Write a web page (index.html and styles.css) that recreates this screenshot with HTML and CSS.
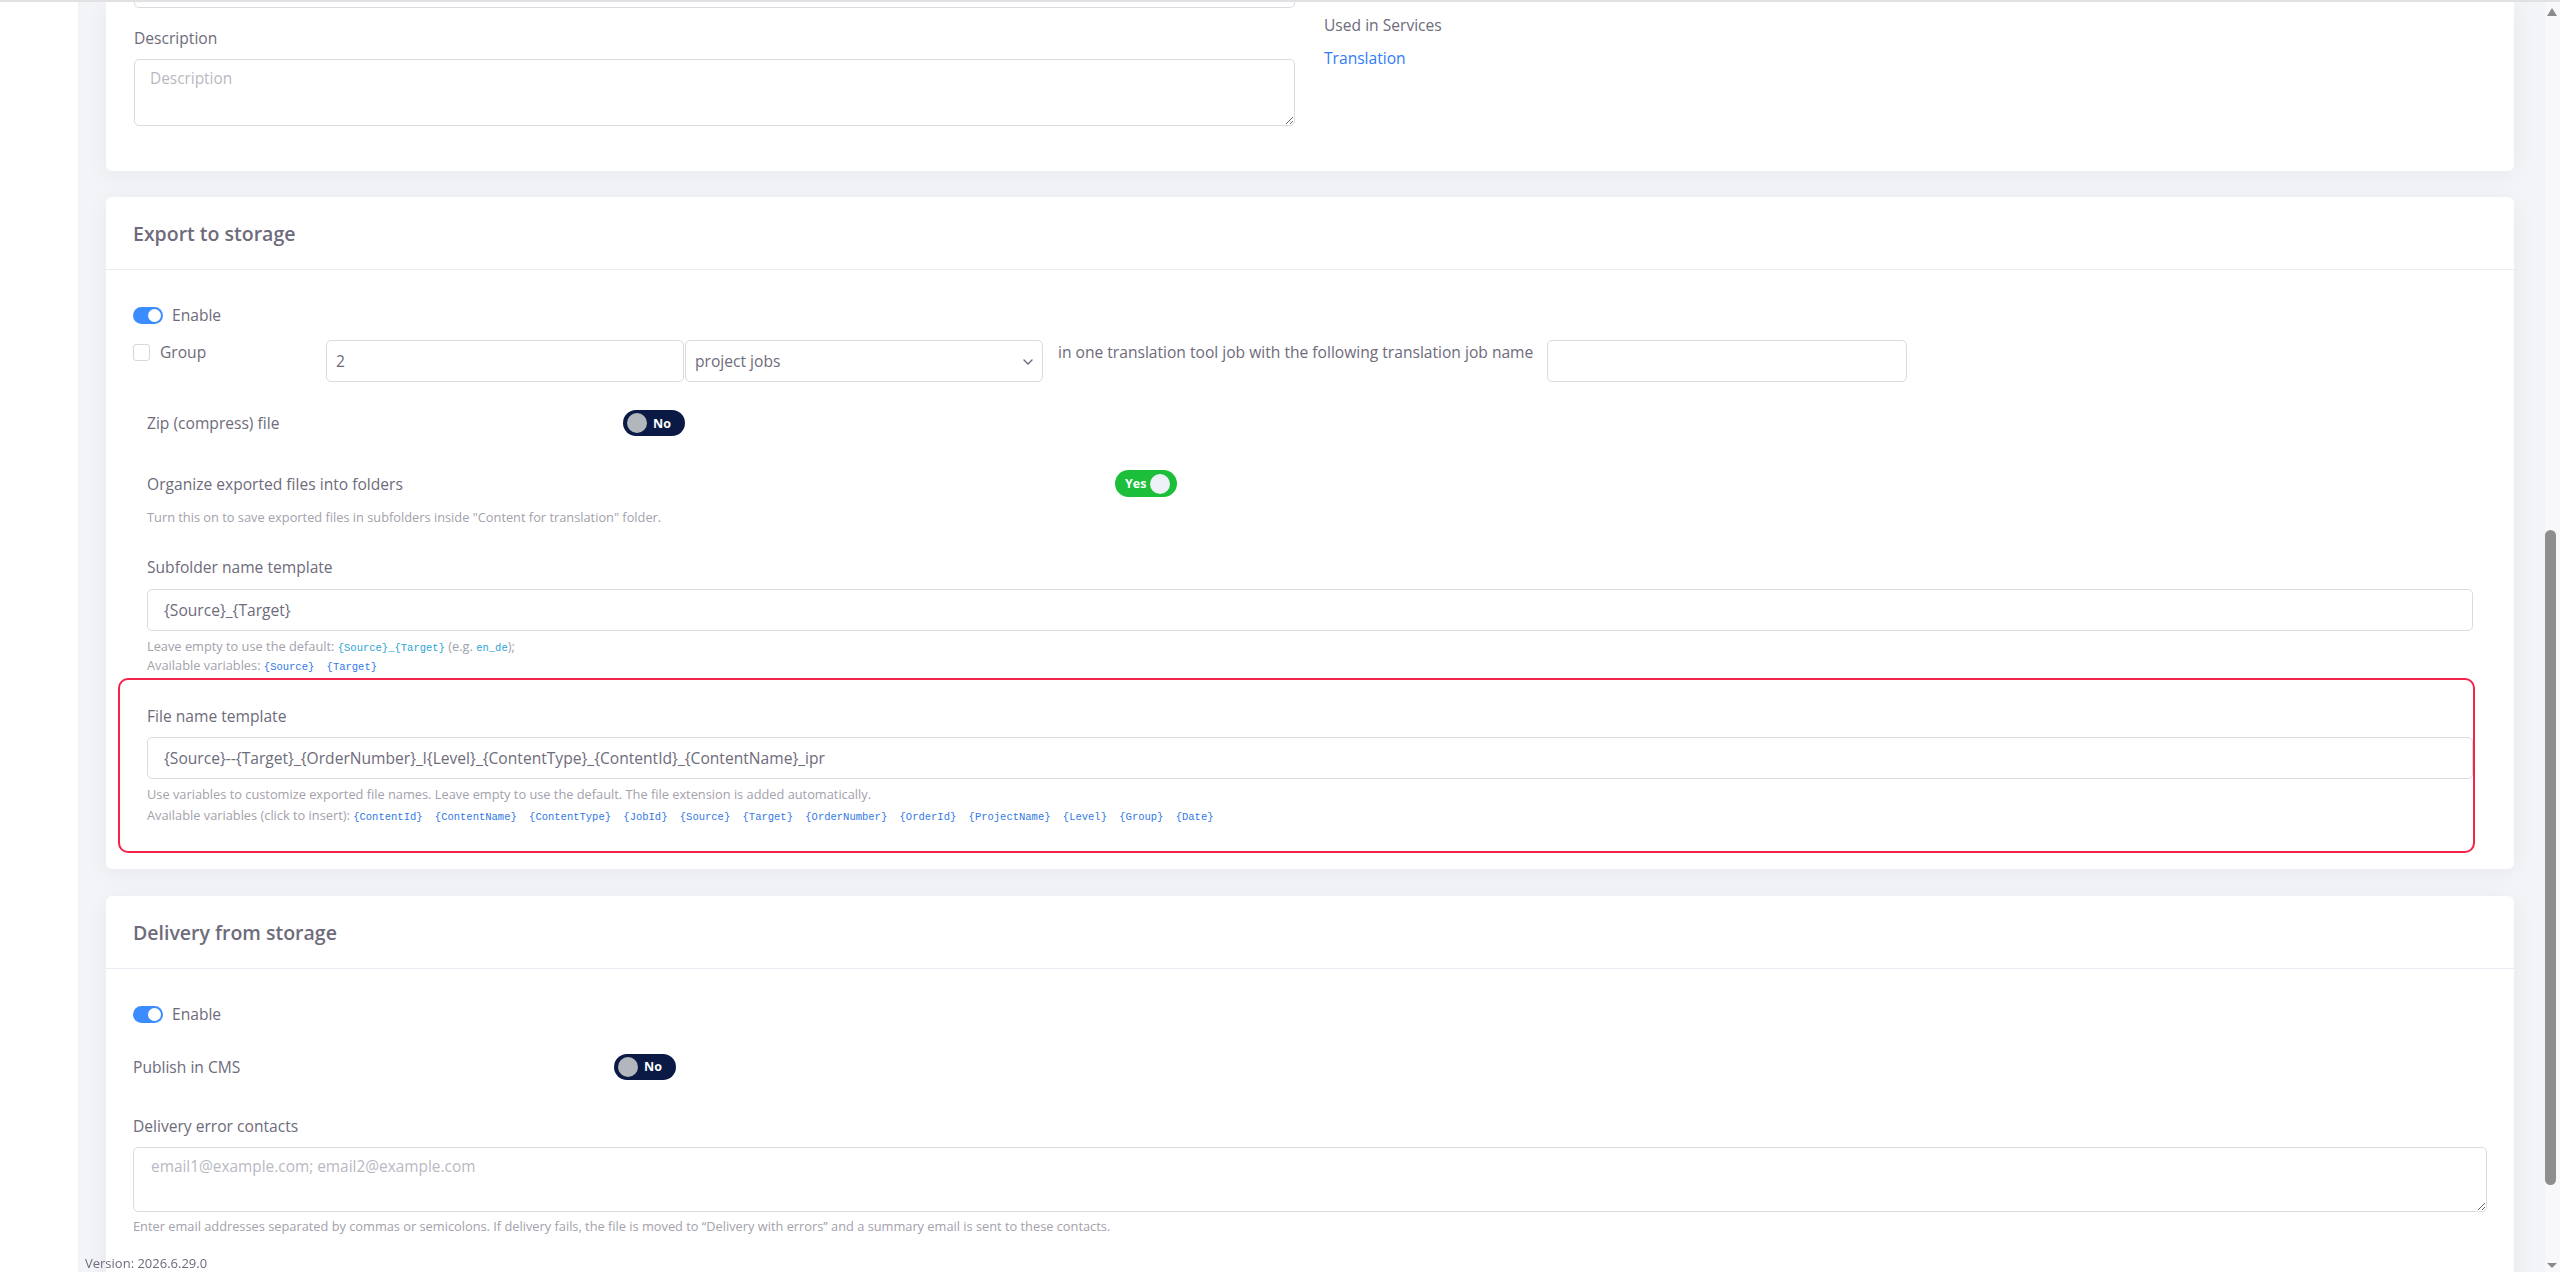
FILE: index.html
```html
<!DOCTYPE html>
<html lang="en">
<head>
<meta charset="utf-8">
<title>Storage settings</title>
<link rel="stylesheet" href="styles.css">
</head>
<body>
<div class="topline"></div>
<div class="frame">
  <div class="sidebar"></div>
  <main class="main">
    <section class="card card-general">
      <div class="general-grid">
        <div class="col-left">
          <div class="input-tail"></div>
          <label class="label label-desc">Description</label>
          <textarea class="textarea textarea-desc" placeholder="Description"></textarea>
        </div>
        <div class="col-right">
          <div class="label">Used in Services</div>
          <a class="link" href="#">Translation</a>
        </div>
      </div>
    </section>

    <section class="card card-export">
      <header class="card-header"><h2 class="card-title">Export to storage</h2></header>
      <div class="card-body">
        <div class="switch-row">
          <span class="switch on"><span class="knob"></span></span>
          <span class="switch-label">Enable</span>
        </div>
        <div class="group-row">
          <div class="group-check">
            <span class="checkbox"></span>
            <span class="check-label">Group</span>
          </div>
          <input class="input input-count" type="text" value="2">
          <div class="select">
            <span>project jobs</span>
            <svg class="chev" width="10" height="6" viewBox="0 0 10 6"><path d="M1 1l4 4 4-4" fill="none" stroke="#6e6b7b" stroke-width="1.4" stroke-linecap="round" stroke-linejoin="round"/></svg>
          </div>
          <span class="group-text">in one translation tool job with the following translation job name</span>
          <input class="input input-jobname" type="text">
        </div>

        <div class="options">
          <div class="opt-row opt-zip">
            <span class="opt-label">Zip (compress) file</span>
            <span class="pill pill-no"><span class="pill-knob"></span><span class="pill-text">No</span></span>
          </div>
          <div class="opt-row opt-org">
            <span class="opt-label">Organize exported files into folders</span>
            <span class="pill pill-yes"><span class="pill-text">Yes</span><span class="pill-knob"></span></span>
          </div>
          <p class="hint hint-org">Turn this on to save exported files in subfolders inside "Content for translation" folder.</p>

          <label class="label label-sub">Subfolder name template</label>
          <input class="input input-wide" type="text" value="{Source}_{Target}">
          <div class="hints">
            <p class="hint">Leave empty to use the default: <code class="code">{Source}_{Target}</code> (e.g. <code class="code">en_de</code>);</p>
            <p class="hint">Available variables: <code class="var">{Source}</code> <code class="var">{Target}</code></p>
          </div>

          <div class="highlight">
            <label class="label label-file">File name template</label>
            <input class="input input-wide" type="text" value="{Source}--{Target}_{OrderNumber}_l{Level}_{ContentType}_{ContentId}_{ContentName}_ipr">
            <div class="hints hints-file">
              <p class="hint">Use variables to customize exported file names. Leave empty to use the default. The file extension is added automatically.</p>
              <p class="hint">Available variables (click to insert): <code class="var">{ContentId}</code> <code class="var">{ContentName}</code> <code class="var">{ContentType}</code> <code class="var">{JobId}</code> <code class="var">{Source}</code> <code class="var">{Target}</code> <code class="var">{OrderNumber}</code> <code class="var">{OrderId}</code> <code class="var">{ProjectName}</code> <code class="var">{Level}</code> <code class="var">{Group}</code> <code class="var">{Date}</code></p>
            </div>
          </div>
        </div>
      </div>
    </section>

    <section class="card card-delivery">
      <header class="card-header"><h2 class="card-title">Delivery from storage</h2></header>
      <div class="card-body">
        <div class="switch-row">
          <span class="switch on"><span class="knob"></span></span>
          <span class="switch-label">Enable</span>
        </div>
        <div class="opt-row opt-publish">
          <span class="opt-label">Publish in CMS</span>
          <span class="pill pill-no"><span class="pill-knob"></span><span class="pill-text">No</span></span>
        </div>
        <label class="label label-contacts">Delivery error contacts</label>
        <textarea class="textarea textarea-mail" placeholder="email1@example.com; email2@example.com"></textarea>
        <p class="hint hint-mail">Enter email addresses separated by commas or semicolons. If delivery fails, the file is moved to “Delivery with errors” and a summary email is sent to these contacts.</p>
      </div>
    </section>
  </main>
  <div class="scrollbar">
    <span class="arrow arrow-up"></span>
    <span class="thumb"></span>
    <span class="arrow arrow-down"></span>
  </div>
</div>
<div class="version">Version: 2026.6.29.0</div>
</body>
</html>
```

FILE: styles.css
```css
* { box-sizing: border-box; }
html, body { margin: 0; padding: 0; }
body {
  width: 2560px;
  height: 1272px;
  overflow: hidden;
  background: #fff;
  font-family: "Open Sans", "Noto Sans", sans-serif;
  font-size: 15.6px;
  color: #6e6b7b;
}
p { margin: 0; }
.topline { height: 2px; background: #e1e1e4; }
.frame { display: flex; height: 1270px; }
.sidebar { width: 78px; flex: none; background: #fff; }
.main {
  width: 2467px;
  flex: none;
  background: #f3f4f8;
  padding: 0 31px 0 28px;
  overflow: hidden;
}
.card {
  background: #fff;
  border-radius: 0 0 6px 6px;
  box-shadow: 0 4px 24px 0 rgba(34, 41, 47, 0.05);
}
.card-general { padding: 0 28px 45px 28px; border-radius: 0 0 6px 6px; }
.general-grid { display: grid; grid-template-columns: 1161px 1fr; column-gap: 29px; }
.input-tail {
  height: 6px;
  border: 1px solid #dcdbe2;
  border-top: none;
  border-radius: 0 0 5px 5px;
}
.label { display: block; line-height: 20px; height: 20px; color: #6e6b7b; font-size: 15.6px; }
.label-desc { margin-top: 20px; }
.textarea {
  display: block;
  width: 100%;
  border: 1px solid #dcdbe2;
  border-radius: 5px;
  font-family: inherit;
  font-size: 15.4px;
  color: #6e6b7b;
  padding: 8px 15px;
  resize: vertical;
  outline: none;
}
.textarea::placeholder, .input::placeholder { color: #b9b9c3; }
.textarea-desc { height: 67px; margin-top: 11px; }
.col-right { padding-top: 13px; }
.link { display: block; margin-top: 13px; line-height: 20px; color: #2f7cf6; text-decoration: none; font-size: 15.6px; }

.card-export { margin-top: 26px; border-radius: 6px; padding-bottom: 16px; }
.card-delivery { margin-top: 27px; border-radius: 6px 6px 0 0; padding-bottom: 200px; }
.card-header {
  height: 73px;
  border-bottom: 1px solid #ebe9f1;
  padding: 0 27px;
  display: flex;
  align-items: center;
}
.card-title { margin: 0; font-size: 19.5px; font-weight: 600; color: #6e6b7b; letter-spacing: 0; }
.card-body { padding: 35px 27px 0 27px; }

.switch-row { display: flex; align-items: center; height: 20px; gap: 9px; }
.switch {
  width: 30px; height: 17px; border-radius: 9px;
  background: #3b8cff; position: relative; flex: none;
}
.switch .knob {
  position: absolute; right: 2px; top: 2px;
  width: 13px; height: 13px; border-radius: 50%; background: #fff;
}
.switch-label { line-height: 20px; }

.group-row { display: flex; align-items: flex-start; margin-top: 15px; height: 42px; }
.group-check { width: 193px; display: flex; align-items: center; gap: 10px; padding-top: 2px; flex: none; }
.checkbox { width: 17px; height: 17px; border: 1px solid #d8d6de; border-radius: 3px; background: #fff; }
.check-label { line-height: 20px; }
.input {
  height: 42px;
  border: 1px solid #dcdbe2;
  border-radius: 5px;
  font-family: inherit;
  font-size: 15.6px;
  color: #6e6b7b;
  padding: 0 16px;
  outline: none;
  background: #fff;
}
.input-count { width: 358px; padding: 0 9px; flex: none; }
.select {
  width: 358px; height: 42px; flex: none;
  border: 1px solid #dcdbe2; border-radius: 5px;
  display: flex; align-items: center; justify-content: space-between;
  padding: 0 9px 0 9px; margin-left: 1px;
}
.chev { margin-top: 1px; }
.group-text { margin-left: 15px; line-height: 20px; padding-top: 2px; white-space: nowrap; }
.input-jobname { width: 360px; margin-left: 14px; flex: none; }

.options { padding: 0 14px; }
.opt-row { display: flex; align-items: center; }
.opt-label { line-height: 20px; }
.opt-zip { margin-top: 28px; height: 26px; }
.opt-zip .opt-label { width: 476px; }
.opt-org { margin-top: 34px; height: 27px; }
.opt-org .opt-label { width: 968px; }
.opt-publish { margin-top: 29px; height: 27px; }
.opt-publish .opt-label { width: 481px; }

.pill {
  height: 27px; width: 62px; border-radius: 14px;
  display: flex; align-items: center; padding: 0 4px; gap: 6px;
  color: #fff; font-size: 12.5px; font-weight: 700;
}
.pill-knob { width: 20px; height: 20px; border-radius: 50%; flex: none; }
.pill-no { background: #0a1a45; height: 26px; }
.pill-no .pill-knob { background: #b2b7bd; }
.pill-yes { background: #1cbf3a; padding-left: 10px; gap: 4px; }
.pill-yes .pill-knob { background: #eef0f8; }

.hint { font-size: 12.8px; line-height: 19px; height: 19px; color: #a3a1ab; white-space: nowrap; }
.hint-org { margin-top: 12px; line-height: 16px; height: 16px; }
.label-sub { margin-top: 32px; }
.input-wide { display: block; width: 100%; margin-top: 12px; }
.hints { margin-top: 6px; }
.code, .var {
  font-family: "Liberation Mono", "DejaVu Sans Mono", monospace;
  font-size: 10.5px;
  line-height: 1;
}
.code { color: #2aa4d5; }
.var { color: #3279e6; margin-right: 9px; }

.highlight {
  margin: 3px -2px 0 -29px;
  border: 2px solid #f5224a;
  border-radius: 10px;
  padding: 26px 0 25px 27px;
}
.label-file { margin-top: 0; }
.highlight .input-wide { margin-top: 11px; }
.hints-file { margin-top: 5px; }
.hints-file .hint { line-height: 21px; height: 21px; }

.label-contacts { margin-top: 36px; }
.textarea-mail { height: 65px; margin-top: 11px; padding: 8px 17px; }
.hint-mail { margin-top: 6px; line-height: 16px; height: 16px; }

.scrollbar {
  width: 15px; flex: none; background: #f8f8fb;
  position: relative;
}
.thumb {
  position: absolute; left: 0; top: 528px;
  width: 11px; height: 655px; border-radius: 6px; background: #8e8e8e;
}
.arrow { position: absolute; left: 2px; width: 0; height: 0; border-left: 5px solid transparent; border-right: 5px solid transparent; }
.arrow-up { top: 6px; border-bottom: 8px solid #8a8a8a; }
.arrow-down { bottom: 4px; border-top: 5px solid #8a8a8a; }

.version {
  position: fixed; left: 85px; bottom: 1px;
  font-size: 13px; line-height: 16px; color: #6e6b7b;
}
```
